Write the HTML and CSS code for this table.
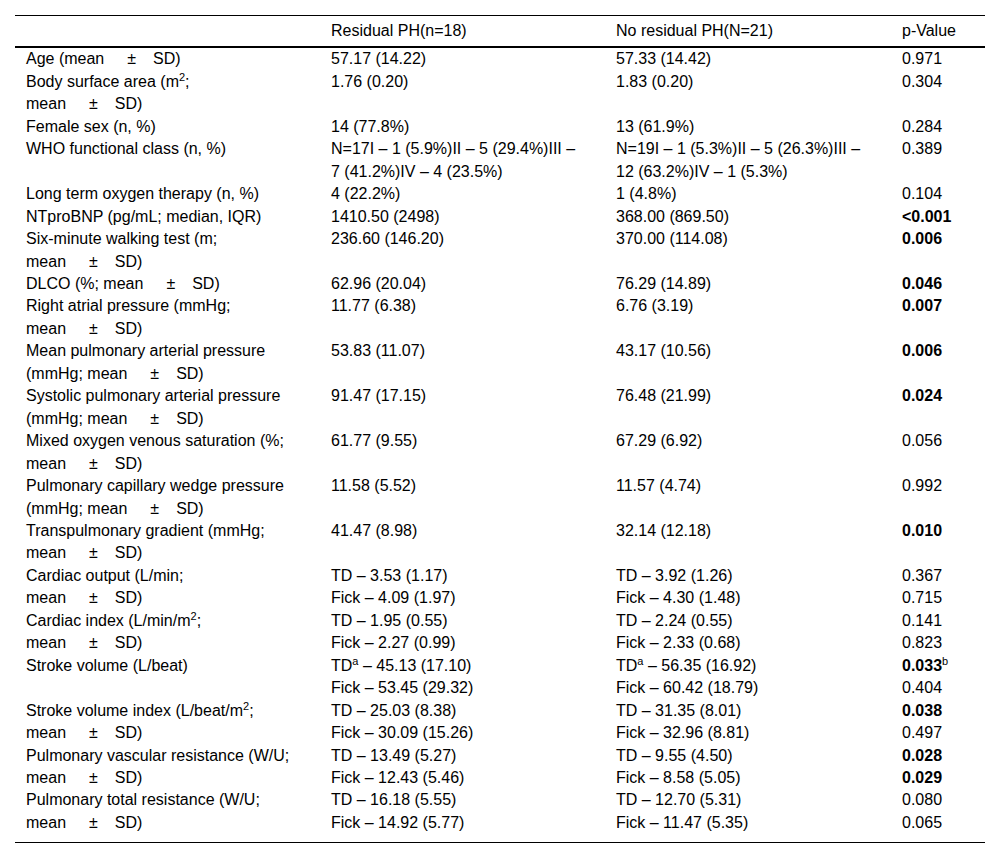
FILE: index.html
```html
<!DOCTYPE html>
<html lang="en">
<head>
<meta charset="utf-8">
<title>Residual PH comparison</title>
<link rel="stylesheet" href="styles.css">
</head>
<body>
<table class="data">
  <colgroup>
    <col class="c-label">
    <col class="c-res">
    <col class="c-nores">
    <col class="c-p">
  </colgroup>
  <thead>
    <tr>
      <th></th>
      <th>Residual PH(n=18)</th>
      <th>No residual PH(N=21)</th>
      <th>p-Value</th>
    </tr>
  </thead>
  <tbody>
    <tr><td>Age (mean<span class="pm">±</span>SD)</td><td>57.17 (14.22)</td><td>57.33 (14.42)</td><td>0.971</td></tr>
    <tr><td>Body surface area (m<sup>2</sup>;<br>mean<span class="pm">±</span>SD)</td><td>1.76 (0.20)</td><td>1.83 (0.20)</td><td>0.304</td></tr>
    <tr><td>Female sex (n, %)</td><td>14 (77.8%)</td><td>13 (61.9%)</td><td>0.284</td></tr>
    <tr><td>WHO functional class (n, %)</td><td>N=17I – 1 (5.9%)II – 5 (29.4%)III –<br>7 (41.2%)IV – 4 (23.5%)</td><td>N=19I – 1 (5.3%)II – 5 (26.3%)III –<br>12 (63.2%)IV – 1 (5.3%)</td><td>0.389</td></tr>
    <tr><td>Long term oxygen therapy (n, %)</td><td>4 (22.2%)</td><td>1 (4.8%)</td><td>0.104</td></tr>
    <tr><td>NTproBNP (pg/mL; median, IQR)</td><td>1410.50 (2498)</td><td>368.00 (869.50)</td><td><b>&lt;0.001</b></td></tr>
    <tr><td>Six-minute walking test (m;<br>mean<span class="pm">±</span>SD)</td><td>236.60 (146.20)</td><td>370.00 (114.08)</td><td><b>0.006</b></td></tr>
    <tr><td>DLCO (%; mean<span class="pm">±</span>SD)</td><td>62.96 (20.04)</td><td>76.29 (14.89)</td><td><b>0.046</b></td></tr>
    <tr><td>Right atrial pressure (mmHg;<br>mean<span class="pm">±</span>SD)</td><td>11.77 (6.38)</td><td>6.76 (3.19)</td><td><b>0.007</b></td></tr>
    <tr><td>Mean pulmonary arterial pressure<br>(mmHg; mean<span class="pm">±</span>SD)</td><td>53.83 (11.07)</td><td>43.17 (10.56)</td><td><b>0.006</b></td></tr>
    <tr><td>Systolic pulmonary arterial pressure<br>(mmHg; mean<span class="pm">±</span>SD)</td><td>91.47 (17.15)</td><td>76.48 (21.99)</td><td><b>0.024</b></td></tr>
    <tr><td>Mixed oxygen venous saturation (%;<br>mean<span class="pm">±</span>SD)</td><td>61.77 (9.55)</td><td>67.29 (6.92)</td><td>0.056</td></tr>
    <tr><td>Pulmonary capillary wedge pressure<br>(mmHg; mean<span class="pm">±</span>SD)</td><td>11.58 (5.52)</td><td>11.57 (4.74)</td><td>0.992</td></tr>
    <tr><td>Transpulmonary gradient (mmHg;<br>mean<span class="pm">±</span>SD)</td><td>41.47 (8.98)</td><td>32.14 (12.18)</td><td><b>0.010</b></td></tr>
    <tr><td rowspan="2">Cardiac output (L/min;<br>mean<span class="pm">±</span>SD)</td><td>TD – 3.53 (1.17)</td><td>TD – 3.92 (1.26)</td><td>0.367</td></tr>
    <tr><td>Fick – 4.09 (1.97)</td><td>Fick – 4.30 (1.48)</td><td>0.715</td></tr>
    <tr><td rowspan="2">Cardiac index (L/min/m<sup>2</sup>;<br>mean<span class="pm">±</span>SD)</td><td>TD – 1.95 (0.55)</td><td>TD – 2.24 (0.55)</td><td>0.141</td></tr>
    <tr><td>Fick – 2.27 (0.99)</td><td>Fick – 2.33 (0.68)</td><td>0.823</td></tr>
    <tr><td rowspan="2">Stroke volume (L/beat)</td><td>TD<sup>a</sup> – 45.13 (17.10)</td><td>TD<sup>a</sup> – 56.35 (16.92)</td><td><b>0.033</b><sup>b</sup></td></tr>
    <tr><td>Fick – 53.45 (29.32)</td><td>Fick – 60.42 (18.79)</td><td>0.404</td></tr>
    <tr><td rowspan="2">Stroke volume index (L/beat/m<sup>2</sup>;<br>mean<span class="pm">±</span>SD)</td><td>TD – 25.03 (8.38)</td><td>TD – 31.35 (8.01)</td><td><b>0.038</b></td></tr>
    <tr><td>Fick – 30.09 (15.26)</td><td>Fick – 32.96 (8.81)</td><td>0.497</td></tr>
    <tr><td rowspan="2">Pulmonary vascular resistance (W/U;<br>mean<span class="pm">±</span>SD)</td><td>TD – 13.49 (5.27)</td><td>TD – 9.55 (4.50)</td><td><b>0.028</b></td></tr>
    <tr><td>Fick – 12.43 (5.46)</td><td>Fick – 8.58 (5.05)</td><td><b>0.029</b></td></tr>
    <tr><td rowspan="2" class="end">Pulmonary total resistance (W/U;<br>mean<span class="pm">±</span>SD)</td><td>TD – 16.18 (5.55)</td><td>TD – 12.70 (5.31)</td><td>0.080</td></tr>
    <tr><td class="end">Fick – 14.92 (5.77)</td><td class="end">Fick – 11.47 (5.35)</td><td class="end">0.065</td></tr>
  </tbody>
</table>
</body>
</html>
```

FILE: styles.css
```css
html, body {
  margin: 0;
  padding: 0;
  background: #fff;
}

body {
  padding: 15px;
  font-family: "Liberation Sans", Arial, Helvetica, sans-serif;
  font-size: 16px;
  color: #000;
}

.data {
  width: 970px;
  border-collapse: collapse;
  table-layout: fixed;
  border-top: 1px solid #000;
  border-bottom: 1px solid #000;
}

.c-label { width: 305px; }
.c-res { width: 285px; }
.c-nores { width: 286px; }
.c-p { width: 94px; }

.data th,
.data td {
  padding: 0 4px 0 11px;
  text-align: left;
  vertical-align: top;
  white-space: nowrap;
  line-height: 22.45px;
}

.data th {
  font-weight: normal;
  padding-top: 4px;
  padding-bottom: 4px;
  border-bottom: 2px solid #000;
}

.data td.end {
  padding-bottom: 8px;
}

.pm {
  margin: 0 17px 0 23px;
}

.data sup {
  font-size: 11px;
  line-height: 0;
  vertical-align: 6px;
}

.data b {
  font-weight: bold;
}
```
